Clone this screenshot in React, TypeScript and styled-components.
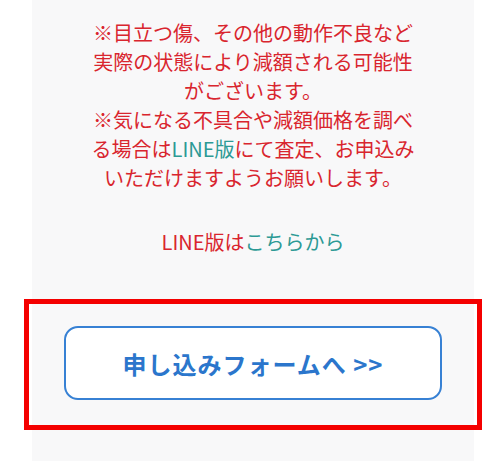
import React from "react";
import styled, { createGlobalStyle } from "styled-components";

const Global = createGlobalStyle`
  html, body { margin: 0; padding: 0; background: #ffffff; }
  body { font-family: "Noto Sans CJK JP", "Noto Sans", sans-serif; }
`;

const Page = styled.div`
  width: 500px;
  height: 461px;
  overflow: hidden;
  background: #ffffff;
`;

const Panel = styled.section`
  margin-left: 32px;
  width: 442px;
  min-height: 461px;
  background: #f8f8f9;
  padding-top: 18px;
  box-sizing: border-box;
  display: flex;
  flex-direction: column;
  align-items: center;
`;

const Notice = styled.p`
  margin: 0;
  width: 332px;
  font-size: 20px;
  line-height: 29px;
  color: #d9252e;
  text-align: center;
`;

const Link = styled.span`
  color: #2c9a95;
`;

const LineLink = styled(Notice)`
  margin-top: 35px;
`;

const Highlight = styled.div`
  margin-top: 43px;
  width: 458px;
  height: 131px;
  box-sizing: border-box;
  border: 5px solid #f40000;
  display: flex;
  align-items: center;
  justify-content: center;
  padding-bottom: 3px;
`;

const FormButton = styled.button`
  width: 378px;
  height: 74px;
  box-sizing: border-box;
  background: #ffffff;
  border: 2.5px solid #3781d4;
  border-radius: 14px;
  color: #2b76cc;
  font-family: "Noto Sans CJK JP", "Noto Sans", sans-serif;
  font-size: 24px;
  font-weight: 700;
  letter-spacing: 1px;
  cursor: pointer;
  padding: 0;
`;

export default function App() {
  return (
    <Page>
      <Global />
      <Panel>
        <Notice>
          ※目立つ傷、その他の動作不良など実際の状態により減額される可能性がございます。
          <br />
          ※気になる不具合や減額価格を調べる場合は<Link>LINE版</Link>にて査定、お申込みいただけますようお願いします。
        </Notice>
        <LineLink>
          LINE版は<Link>こちらから</Link>
        </LineLink>
        <Highlight>
          <FormButton>申し込みフォームへ &gt;&gt;</FormButton>
        </Highlight>
      </Panel>
    </Page>
  );
}
